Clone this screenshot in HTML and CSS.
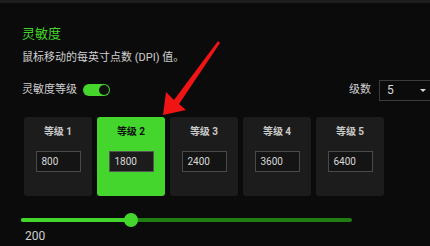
FILE: index.html
```html
<!DOCTYPE html>
<html lang="zh">
<head>
<meta charset="utf-8">
<link rel="stylesheet" href="styles.css">
</head>
<body>
<div class="topbar"></div>
<main class="panel">
  <h1 class="title">灵敏度</h1>
  <p class="desc">鼠标移动的每英寸点数 (DPI) 值。</p>
  <div class="row">
    <div class="group">
      <span class="label">灵敏度等级</span>
      <span class="toggle"><span class="knob"></span></span>
    </div>
    <div class="group right">
      <span class="label">级数</span>
      <div class="select"><span>5</span><span class="caret"></span></div>
    </div>
  </div>
  <div class="cards">
    <div class="card"><div class="card-title">等级 1</div><div class="input">800</div></div>
    <div class="card active"><div class="card-title">等级 2</div><div class="input">1800</div></div>
    <div class="card"><div class="card-title">等级 3</div><div class="input">2400</div></div>
    <div class="card"><div class="card-title">等级 4</div><div class="input">3600</div></div>
    <div class="card"><div class="card-title">等级 5</div><div class="input">6400</div></div>
  </div>
  <div class="slider">
    <div class="track"><div class="fill"></div><div class="thumb"></div></div>
  </div>
  <div class="value">200</div>
</main>
<svg class="arrow" width="430" height="246" viewBox="0 0 430 246">
  <polygon points="163,115 166,92 174,100 218,41 220,43 179,104 186,110" fill="#f01414"/>
</svg>
</body>
</html>
```

FILE: styles.css
```css
html, body {
  margin: 0;
  padding: 0;
  background: #0b0b0b;
  width: 430px;
  height: 246px;
  overflow: hidden;
  font-family: Roboto, "Noto Sans CJK SC", sans-serif;
  position: relative;
}
.topbar {
  height: 3px;
  background: #1e1e1e;
}
.panel {
  padding-left: 22px;
}
.title {
  margin: 22px 0 0;
  font-size: 13px;
  line-height: 18px;
  font-weight: 400;
  color: #44d62c;
}
.desc {
  margin: 6px 0 0;
  font-size: 11px;
  line-height: 18px;
  color: #cfcfcf;
}
.row {
  display: flex;
  justify-content: space-between;
  align-items: center;
  margin-top: 12px;
  margin-right: -11px;
  height: 22px;
}
.group {
  display: flex;
  align-items: center;
}
.label {
  font-size: 11px;
  color: #cfcfcf;
  line-height: 18px;
}
.toggle {
  display: inline-flex;
  justify-content: flex-end;
  align-items: center;
  width: 27px;
  height: 12px;
  margin-left: 6px;
  border-radius: 6px;
  background: #44d62c;
}
.knob {
  width: 10px;
  height: 10px;
  margin-right: 1px;
  border-radius: 50%;
  background: #101010;
}
.right .label {
  margin-right: 8px;
}
.select {
  box-sizing: border-box;
  width: 62px;
  height: 21px;
  border: 1px solid #3c3c3c;
  display: flex;
  align-items: center;
  padding-left: 7px;
  font-size: 12px;
  color: #d8d8d8;
  position: relative;
}
.caret {
  position: absolute;
  left: 40px;
  top: 8px;
  border-left: 3px solid transparent;
  border-right: 3px solid transparent;
  border-top: 3px solid #d8d8d8;
}
.cards {
  display: flex;
  gap: 5px;
  margin-top: 16px;
  margin-left: 2px;
}
.card {
  box-sizing: border-box;
  width: 68px;
  height: 79px;
  background: #1c1c1c;
  border-radius: 3px;
  display: flex;
  flex-direction: column;
  align-items: center;
  padding-top: 7px;
}
.card-title {
  font-size: 10px;
  line-height: 16px;
  font-weight: 700;
  color: #c8c8c8;
}
.card.active {
  background: #44d62c;
}
.card.active .card-title {
  color: #111;
}
.input {
  box-sizing: border-box;
  margin-top: 11px;
  width: 45px;
  height: 21px;
  border: 1px solid #4a4a4a;
  background: #141414;
  font-size: 10px;
  line-height: 19px;
  color: #d8d8d8;
  padding-left: 5px;
}
.card.active .input {
  background: #1c1c1c;
  border-color: #555;
}
.slider {
  margin-top: 17px;
  margin-left: -1px;
  height: 14px;
  display: flex;
  align-items: center;
}
.track {
  position: relative;
  width: 331px;
  height: 4px;
  border-radius: 2px;
  background: #1f7d12;
}
.fill {
  width: 108px;
  height: 4px;
  border-radius: 2px;
  background: #44d62c;
}
.thumb {
  position: absolute;
  left: 103px;
  top: -5px;
  width: 14px;
  height: 14px;
  border-radius: 50%;
  background: #44d62c;
}
.value {
  margin-top: 2px;
  margin-left: 3px;
  font-size: 12px;
  line-height: 14px;
  color: #cfcfcf;
}
.arrow {
  position: absolute;
  left: 0;
  top: 0;
  pointer-events: none;
}
```
